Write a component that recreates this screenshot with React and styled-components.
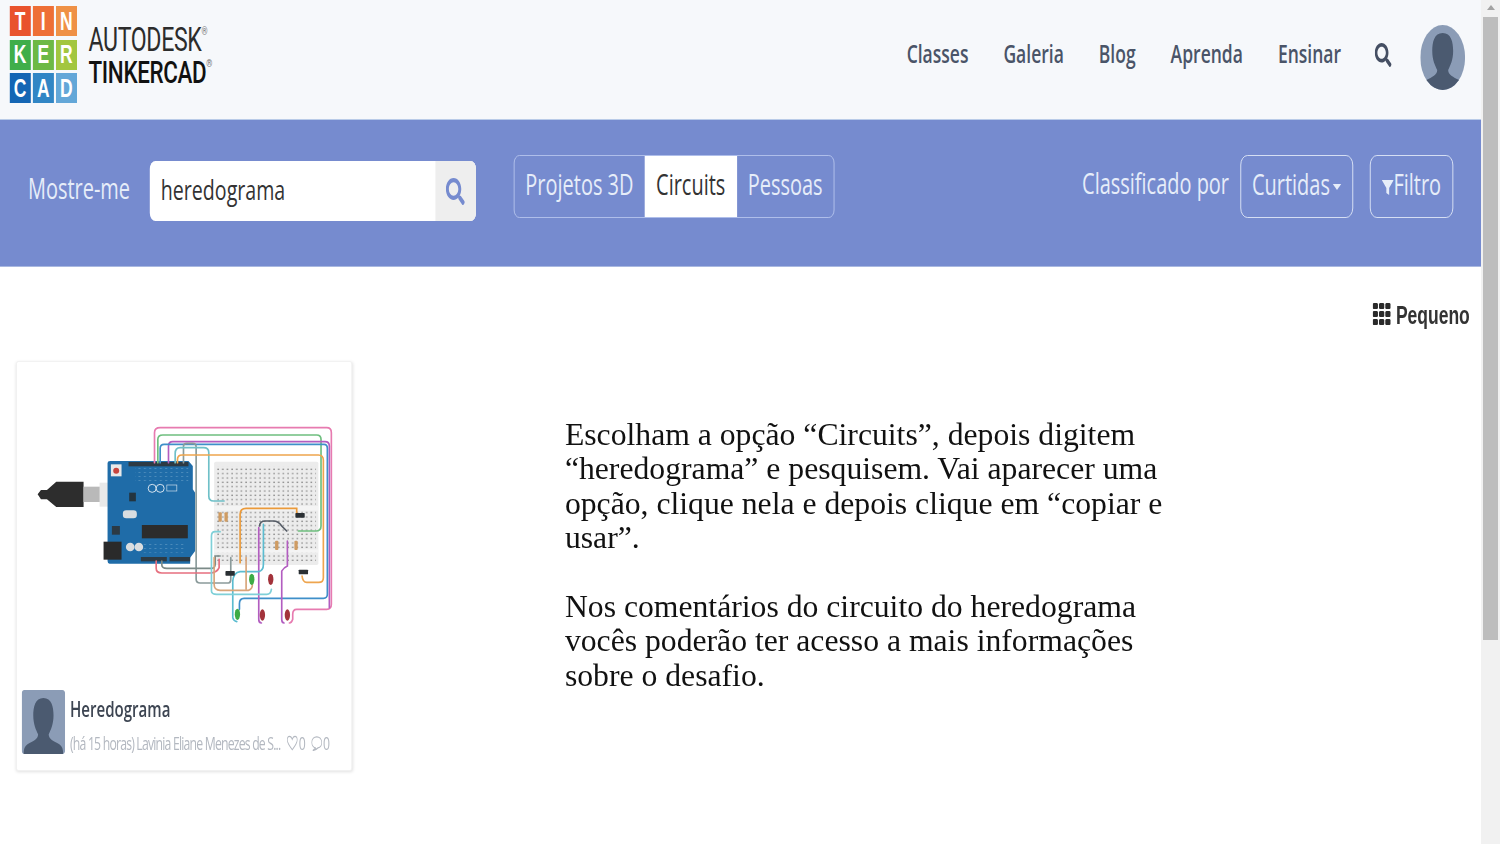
import styled, { createGlobalStyle } from "styled-components";
import { FaSearch } from "react-icons/fa";

const SQUEEZE = 0.7;

const GlobalStyle = createGlobalStyle`
  html, body {
    margin: 0;
    height: 100%;
    overflow: hidden;
    background: #fff;
  }
`;

const Page = styled.div`
  display: flex;
  width: 1500px;
  height: 844px;
  overflow: hidden;
`;

const Main = styled.div`
  width: 1481px;
  height: 844px;
  overflow: hidden;
`;

/* the whole capture is squashed sideways, so the page is built wide and scaled */
const Stage = styled.div`
  width: ${1481 / SQUEEZE}px;
  height: 844px;
  transform: scaleX(${SQUEEZE});
  transform-origin: left top;
  font-family: "Open Sans", "Liberation Sans", sans-serif;
  filter: blur(0.35px);
`;

const Header = styled.header`
  height: 120px;
  box-sizing: border-box;
  background: #f6f8fb;
  border-bottom: 1px solid #b9cbe8;
  display: flex;
  align-items: center;
  justify-content: space-between;
  padding: 0 23px 10px 14px;
`;

const Brand = styled.div`
  display: flex;
  align-items: center;
  gap: 17px;
`;

const LogoGrid = styled.div`
  display: grid;
  grid-template-columns: repeat(3, 29.5px);
  grid-template-rows: repeat(3, 30px);
  gap: 3.5px 3.5px;
`;

const Tile = styled.span`
  display: flex;
  align-items: center;
  justify-content: center;
  background: ${(p) => p.$bg};
  color: #fff;
  font-family: "Liberation Sans", sans-serif;
  font-weight: 700;
  font-size: 25px;
`;

const Wordmark = styled.div`
  display: flex;
  flex-direction: column;
  font-family: "Roboto", "Liberation Sans", sans-serif;
  line-height: 32px;
  margin-top: 2px;
  letter-spacing: -0.5px;
`;

const WordLine = styled.span`
  font-weight: ${(p) => (p.$bold ? 500 : 400)};
  font-size: ${(p) => (p.$bold ? 32 : 33)}px;
  color: ${(p) => (p.$bold ? "#111" : "#2c2c2c")};
  white-space: nowrap;
`;

const Reg = styled.sup`
  font-size: 11px;
  line-height: 0;
  letter-spacing: 0;
  color: #777;
  vertical-align: 16px;
`;

const Nav = styled.nav`
  display: flex;
  align-items: center;
  gap: 50px;
`;

const NavLink = styled.span`
  font-size: 25px;
  font-weight: 600;
  padding-bottom: 4px;
  color: #4a5468;
`;

const NavSearch = styled.span`
  display: flex;
  color: #454f63;
  font-size: 24px;
  margin: 0 -9px 0 -2px;
`;

const Avatar = styled.svg`
  width: 64px;
  height: 65px;
  margin-top: 5px;
  border-radius: 50%;
`;

const Bar = styled.section`
  height: 147px;
  box-sizing: border-box;
  background: #768bcf;
  border-bottom: 1px solid #a9b8e0;
  display: flex;
  align-items: flex-start;
  padding: 35px 40px 0;
`;

const BarLabel = styled.span`
  font-size: 28.5px;
  line-height: ${(p) => p.$line}px;
  color: #e6edf9;
  white-space: nowrap;
`;

const SearchBox = styled.div`
  display: flex;
  width: 466px;
  height: 60px;
  margin: 6px 54px 0 28px;
  border-radius: 8px;
  overflow: hidden;
  background: #fff;
`;

const SearchText = styled.span`
  flex: 1;
  padding-left: 16px;
  font-size: 28px;
  line-height: 56px;
  color: #333;
`;

const SearchAddon = styled.span`
  width: 58px;
  display: flex;
  align-items: center;
  justify-content: center;
  background: #eeeeee;
  color: #768bcf;
  font-size: 27px;
`;

const Segments = styled.div`
  display: flex;
  height: 63px;
  box-sizing: border-box;
  border: 1.5px solid #b9c8ee;
  border-radius: 8px;
  overflow: hidden;
`;

const Segment = styled.span`
  width: ${(p) => p.$w}px;
  text-align: center;
  font-size: 28.5px;
  line-height: 56px;
  color: ${(p) => (p.$active ? "#333" : "#e6edf9")};
  background: ${(p) => (p.$active ? "#fff" : "transparent")};
`;

const BarRight = styled.div`
  margin-left: auto;
  display: flex;
  align-items: flex-start;
`;

const OutlineButton = styled.span`
  height: 63px;
  box-sizing: border-box;
  display: flex;
  align-items: center;
  justify-content: center;
  width: ${(p) => p.$w}px;
  margin-left: ${(p) => p.$gap}px;
  border: 1.5px solid #e6edf9;
  border-radius: 10px;
  font-size: 28.5px;
  padding-bottom: 6px;
  color: #e6edf9;
`;

const Caret = styled.i`
  width: 0;
  height: 0;
  margin: 6px 0 0 4px;
  border-left: 6px solid transparent;
  border-right: 6px solid transparent;
  border-top: 6px solid #e6edf9;
`;

const FunnelIcon = styled.svg`
  width: 17px;
  height: 17px;
  margin-top: 8px;
`;

const ViewRow = styled.div`
  height: 94px;
  display: flex;
  align-items: flex-start;
  justify-content: flex-end;
  gap: 7px;
  padding: 32px 16px 0 0;
  box-sizing: border-box;
  font-family: "Liberation Sans", sans-serif;
  font-weight: 700;
  font-size: 25px;
  line-height: 32px;
  color: #333;
`;

const DotsIcon = styled.svg`
  width: 26px;
  height: 22px;
  margin-top: 4px;
`;

const Content = styled.div`
  display: flex;
  align-items: flex-start;
`;

const Card = styled.article`
  width: 480px;
  height: 410px;
  flex-shrink: 0;
  box-sizing: border-box;
  margin-left: 23px;
  background: #fff;
  border: 1px solid #f0f0f0;
  border-radius: 3px;
  box-shadow: 0 1px 4px rgba(0, 0, 0, 0.12);
  display: flex;
  flex-direction: column;
  padding: 49px 0 0;
`;

const CircuitArt = styled.svg`
  width: 471px;
  height: 230px;
  margin-left: 5px;
  filter: blur(0.6px);
`;

const CardFoot = styled.div`
  display: flex;
  gap: 7px;
  margin: 49px 0 0 7px;
`;

const Thumb = styled.svg`
  width: 62px;
  height: 64px;
  flex-shrink: 0;
  border-radius: 4px;
`;

const CardText = styled.div`
  display: flex;
  flex-direction: column;
  min-width: 0;
`;

const CardTitle = styled.span`
  font-size: 21.5px;
  font-weight: 600;
  line-height: 37px;
  color: #3d4552;
`;

const CardMeta = styled.span`
  display: flex;
  align-items: center;
  font-size: 17.5px;
  line-height: 28px;
  margin-top: 2px;
  color: #b3b8c0;
  white-space: nowrap;
  letter-spacing: -1.15px;
`;

const MetaIcon = styled.svg`
  width: 17px;
  height: 16px;
  margin: 0 1px 0 8px;
`;

/* the slide text on top was not squashed, undo the stage scale */
const NoteColumn = styled.div`
  margin-left: ${(565 - 16 - 336) / SQUEEZE}px;
  margin-top: 57px;
  width: 620px;
  flex-shrink: 0;
  transform: scaleX(${1 / SQUEEZE});
  transform-origin: left top;
`;

const Note = styled.p`
  margin: 0 0 34.4px;
  font-family: "Liberation Serif", serif;
  font-size: 31.7px;
  line-height: 34.4px;
  color: #111;
`;

const Scrollbar = styled.aside`
  width: 19px;
  height: 844px;
  background: #f1f1f1;
  display: flex;
  flex-direction: column;
  align-items: center;
`;

const ScrollArrow = styled.i`
  width: 0;
  height: 0;
  margin: 5px 0 7px;
  border-left: 4px solid transparent;
  border-right: 4px solid transparent;
  border-bottom: 5px solid #a3a3a3;
`;

const ScrollThumb = styled.div`
  width: 15px;
  height: 623px;
  background: #bdbdbd;
`;

const tiles = [
  ["T", "#e9532d"], ["I", "#ee6f36"], ["N", "#ef9146"],
  ["K", "#3fae4a"], ["E", "#6db945"], ["R", "#a2c63f"],
  ["C", "#1466b4"], ["A", "#3186c5"], ["D", "#63a7d8"],
];

const wires = [
  ["#e77bb0", "M403 155V65Q403 50 420 50H920Q934 50 934 65V580Q934 595 920 595H830Q818 595 818 610V625Q815 636 808 636"],
  ["#6fbf7f", "M413 155V85Q413 72 428 72H890Q903 72 903 85V345Q903 360 888 360H835"],
  ["#b25dc0", "M445 155V105Q445 92 458 92H915Q928 92 928 105V590"],
  ["#3f8fc9", "M420 155V112Q420 100 432 100H912Q922 100 922 112V550Q922 562 910 562H672Q658 562 658 578V595"],
  ["#8a9a9a", "M490 155V105Q490 97 500 97H518Q528 97 528 108V505Q528 516 540 516H625Q632 516 632 505V440"],
  ["#6fc0c8", "M465 155V128Q465 110 480 110H550Q566 110 566 125V255Q566 270 580 270H612"],
  ["#eea54e", "M472 155V145Q472 132 486 132H895Q910 132 910 148V500Q910 514 896 514H860Q848 514 846 495"],
  ["#eb9a3a", "M660 455V310Q660 292 678 292H830V310"],
  ["#555c66", "M718 345Q720 330 735 330H760Q775 330 785 345L800 360"],
  ["#b25dc0", "M802 390V465Q790 470 785 480V625Q785 636 792 636"],
  ["#b25dc0", "M716 350V625Q716 636 724 636"],
  ["#5bbcd0", "M730 340V460Q730 480 715 482H660Q640 485 638 510V620Q640 630 650 632"],
  ["#e66f7f", "M408 450V472Q408 486 425 486H570Q590 486 597 470V445"],
  ["#7b8a88", "M425 450V462Q425 472 440 472H575Q585 472 585 460V435H600"],
  ["#7fd0d8", "M600 362H585Q574 362 574 375V540Q574 550 590 550H740Q752 550 754 535"],
  ["#d8a57a", "M582 440V520Q582 538 600 538H685Q697 535 697 520"],
  ["#d8a57a", "M678 440V535"],
];

const leds = [
  [695, 505, "#3cab45"], [752, 505, "#a3333b"],
  [652, 610, "#3cab45"], [727, 612, "#a3333b"], [802, 612, "#a3333b"],
];

const chips = [[630, 487], [850, 483], [840, 313]];

const resistors = [[600, 318], [618, 318], [770, 403], [828, 403]];

const Silhouette = ({ fill }) => (
  <path
    d="M22.5 8C14 8 12 17 12 26C12 35 15 41 17 45C17 50 12 52 6 55C3 57 2 60 2 65H43C43 60 42 57 39 55C33 52 28 50 28 45C30 41 33 35 33 26C33 17 31 8 22.5 8Z"
    fill={fill}
  />
);

const CircuitDrawing = () => (
  <CircuitArt viewBox="0 0 990 690" preserveAspectRatio="none">
    <defs>
      <pattern id="holes" width="14" height="13" patternUnits="userSpaceOnUse">
        <rect x="4" y="4" width="4" height="4" fill="#7f7f7f" />
      </pattern>
      <pattern id="pcb" width="16" height="12" patternUnits="userSpaceOnUse">
        <rect x="3" y="3" width="6" height="2" fill="#7fb0d2" opacity="0.7" />
      </pattern>
    </defs>
    {/* usb plug */}
    <path d="M52 250L62 237H80L108 212H190V288H108L80 265H62Z" fill="#2d2d2d" />
    <rect x="190" y="227" width="50" height="46" fill="#b9b9b9" />
    <rect x="238" y="215" width="62" height="72" fill="#e9e9e9" />
    {/* breadboard */}
    <rect x="582" y="152" width="313" height="310" rx="5" fill="#ececec" />
    <rect x="590" y="165" width="298" height="285" fill="url(#holes)" />
    <rect x="582" y="285" width="313" height="14" fill="#f4f4f4" />
    <rect x="582" y="415" width="313" height="10" fill="#f4f4f4" />
    {/* arduino */}
    <path d="M262 156Q262 150 270 150H505L518 165V235L525 245V420L510 440V458H268Q262 458 262 450Z" fill="#1f6ca8" />
    <rect x="345" y="170" width="160" height="40" fill="url(#pcb)" />
    <rect x="365" y="395" width="130" height="30" fill="url(#pcb)" />
    <rect x="325" y="153" width="180" height="13" fill="#2d3a44" />
    <rect x="272" y="160" width="32" height="36" fill="#e9e9e9" />
    <circle cx="288" cy="179" r="9" fill="#c8453e" />
    <rect x="250" y="392" width="54" height="54" fill="#2a2a2a" />
    <rect x="308" y="298" width="42" height="24" rx="10" fill="#d8dde0" />
    <rect x="327" y="245" width="20" height="26" fill="#23343f" />
    <rect x="365" y="342" width="138" height="40" fill="#2c2c2c" />
    <rect x="275" y="345" width="24" height="26" fill="#2c3a44" />
    <circle cx="330" cy="408" r="13" fill="#d9dde0" />
    <circle cx="356" cy="408" r="13" fill="#d9dde0" />
    <rect x="362" y="438" width="78" height="13" fill="#2d3a44" />
    <rect x="448" y="438" width="62" height="13" fill="#2d3a44" />
    <circle cx="396" cy="232" r="12" fill="none" stroke="#d4e2ee" strokeWidth="3" />
    <circle cx="420" cy="232" r="12" fill="none" stroke="#d4e2ee" strokeWidth="3" />
    <rect x="440" y="222" width="30" height="18" fill="none" stroke="#d4e2ee" strokeWidth="2" />
    {/* wires */}
    {wires.map(([stroke, d], i) => (
      <path key={i} d={d} fill="none" stroke={stroke} strokeWidth="5" strokeLinecap="round" />
    ))}
    {resistors.map(([x, y], i) => (
      <rect key={i} x={x - 5} y={y - 14} width="10" height="28" rx="3" fill="#cf9c63" />
    ))}
    {chips.map(([x, y], i) => (
      <rect key={i} x={x - 14} y={y - 7} width="28" height="14" rx="2" fill="#2a2f33" />
    ))}
    {leds.map(([x, y, fill], i) => (
      <ellipse key={i} cx={x} cy={y} rx="8" ry="17" fill={fill} />
    ))}
  </CircuitArt>
);

const App = () => {
  return (
    <Page>
      <GlobalStyle />
      <Main>
        <Stage>
          <Header>
            <Brand>
              <LogoGrid>
                {tiles.map(([letter, bg]) => (
                  <Tile key={letter} $bg={bg}>{letter}</Tile>
                ))}
              </LogoGrid>
              <Wordmark>
                <WordLine>AUTODESK<Reg>®</Reg></WordLine>
                <WordLine $bold>TINKERCAD<Reg>®</Reg></WordLine>
              </Wordmark>
            </Brand>
            <Nav>
              <NavLink>Classes</NavLink>
              <NavLink>Galeria</NavLink>
              <NavLink>Blog</NavLink>
              <NavLink>Aprenda</NavLink>
              <NavLink>Ensinar</NavLink>
              <NavSearch><FaSearch /></NavSearch>
              <Avatar viewBox="0 0 45 65" preserveAspectRatio="none">
                <rect width="45" height="65" fill="#8b9cb6" />
                <Silhouette fill="#4b5a70" />
              </Avatar>
            </Nav>
          </Header>

          <Bar>
            <BarLabel $line={66}>Mostre-me</BarLabel>
            <SearchBox>
              <SearchText>heredograma</SearchText>
              <SearchAddon><FaSearch /></SearchAddon>
            </SearchBox>
            <Segments>
              <Segment $w={186}>Projetos 3D</Segment>
              <Segment $w={132} $active>Circuits</Segment>
              <Segment $w={138}>Pessoas</Segment>
            </Segments>
            <BarRight>
              <BarLabel $line={57}>Classificado por</BarLabel>
              <OutlineButton $w={161} $gap={16}>Curtidas<Caret /></OutlineButton>
              <OutlineButton $w={119} $gap={24}>
                <FunnelIcon viewBox="0 0 17 17">
                  <path d="M0 1H17L10.5 9V16L6.5 14V9Z" fill="#e6edf9" />
                </FunnelIcon>
                Filtro
              </OutlineButton>
            </BarRight>
          </Bar>

          <ViewRow>
            <DotsIcon viewBox="0 0 26 22">
              {[0, 9, 18].map((x) =>
                [0, 8, 16].map((y) => (
                  <rect key={`${x}-${y}`} x={x} y={y} width="7.5" height="6" rx="1.5" fill="#2a2a2a" />
                ))
              )}
            </DotsIcon>
            Pequeno
          </ViewRow>

          <Content>
            <Card>
              <CircuitDrawing />
              <CardFoot>
                <Thumb viewBox="0 0 45 65" preserveAspectRatio="none">
                  <rect width="45" height="65" fill="#8b9cb6" />
                  <Silhouette fill="#4b5a70" />
                </Thumb>
                <CardText>
                  <CardTitle>Heredograma</CardTitle>
                  <CardMeta>
                    (há 15 horas) Lavinia Eliane Menezes de S...
                    <MetaIcon viewBox="0 0 24 18" preserveAspectRatio="none">
                      <path d="M12 16.5C5 11 2 8.5 2 5.5C2 3 4 1.5 6.5 1.5C9 1.5 11 3 12 5C13 3 15 1.5 17.5 1.5C20 1.5 22 3 22 5.5C22 8.5 19 11 12 16.5Z" fill="none" stroke="#b3b8c0" strokeWidth="1.4" />
                    </MetaIcon>
                    0
                    <MetaIcon viewBox="0 0 24 18" preserveAspectRatio="none">
                      <path d="M12 2C6.5 2 2 4.5 2 8.5C2 12.5 6.5 14.5 10 14.5L4 17.5C9 17 13 15.5 14.5 14.5C19 14 22 12 22 8.5C22 4.5 17.5 2 12 2Z" fill="none" stroke="#b3b8c0" strokeWidth="1.4" />
                    </MetaIcon>
                    0
                  </CardMeta>
                </CardText>
              </CardFoot>
            </Card>
            <NoteColumn>
              <Note>
                Escolham a opção “Circuits”, depois digitem “heredograma” e pesquisem. Vai aparecer uma
                opção, clique nela e depois clique em “copiar e usar”.
              </Note>
              <Note>
                Nos comentários do circuito do heredograma vocês poderão ter acesso a mais informações
                sobre o desafio.
              </Note>
            </NoteColumn>
          </Content>
        </Stage>
      </Main>
      <Scrollbar>
        <ScrollArrow />
        <ScrollThumb />
      </Scrollbar>
    </Page>
  );
};

export default App;
